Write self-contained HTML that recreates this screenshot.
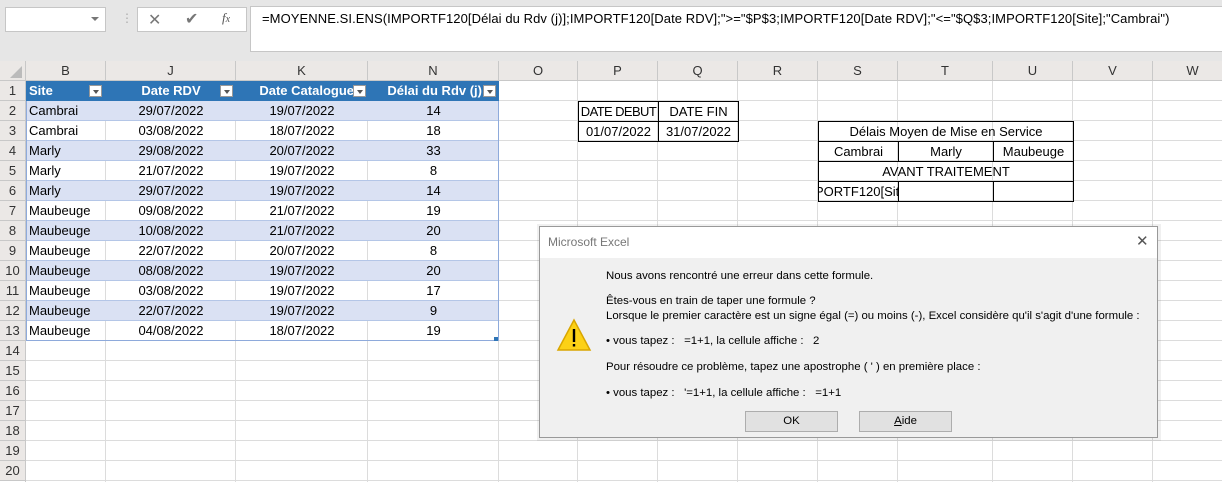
<!DOCTYPE html>
<html><head><meta charset="utf-8"><style>
body{margin:0;width:1222px;height:482px;overflow:hidden;background:#fff;font-family:"Liberation Sans",sans-serif;position:relative}
.a{position:absolute}
.c{position:absolute;height:20px;line-height:20px;font-size:13px;white-space:nowrap;overflow:hidden}
.h{position:absolute;top:61px;height:20px;line-height:20px;font-size:13px;text-align:center;color:#333;border-right:1px solid #c8c8c8;box-sizing:border-box}
.rn{position:absolute;left:0;width:25px;height:20px;line-height:20px;font-size:13px;text-align:center;color:#333;background:#ebe8e6;border-bottom:1px solid #c8c8c8;box-sizing:border-box}
.vl{position:absolute;top:81px;bottom:0;width:1px;background:#dcdcdc}
.dd{position:absolute;top:4px;width:13px;height:12px;background:#fff;border:1px solid #999;box-sizing:border-box}
.dd:after{content:"";position:absolute;left:3px;top:4px;border:3px solid transparent;border-top:4px solid #555}
.bx{position:absolute;border:1px solid #000;box-sizing:border-box;font-size:13px;text-align:center;line-height:19px;color:#000;white-space:nowrap;overflow:hidden}
.dt{position:absolute;left:606px;font-size:11.4px;color:#000;white-space:nowrap}
.btn{position:absolute;top:411px;height:21px;width:93px;background:#e1e1e1;border:1px solid #adadad;box-sizing:border-box;font-size:11.4px;text-align:center;line-height:19px}
</style></head><body>
<div class="a" style="left:0;top:0;width:1222px;height:61px;background:#e6e6e6"></div>
<div class="a" style="left:5px;top:7px;width:101px;height:25px;background:#fff;border:1px solid #c6c6c6;box-sizing:border-box"></div>
<div class="a" style="left:91px;top:17px;border:4px solid transparent;border-top:4px solid #777"></div>
<div class="a" style="left:121px;top:11px;font-size:12px;color:#aaa">⋮</div>
<div class="a" style="left:137px;top:7px;width:110px;height:25px;background:#fff;border:1px solid #c6c6c6;box-sizing:border-box"></div>
<div class="a" style="left:148px;top:10px;font-size:16px;color:#777">✕</div>
<div class="a" style="left:185px;top:9px;font-size:16px;color:#777">✔</div>
<div class="a" style="left:222px;top:10px;font-size:13px;font-style:italic;font-family:'Liberation Serif',serif;color:#555">f<span style="font-size:10px">x</span></div>
<div class="a" style="left:250px;top:6px;width:980px;height:46px;background:#fff;border:1px solid #c6c6c6;box-sizing:border-box"></div>
<div class="a" style="left:262px;top:11px;font-size:13px;letter-spacing:0.08px;color:#000;white-space:nowrap">=MOYENNE.SI.ENS(IMPORTF120[Délai du Rdv (j)];IMPORTF120[Date RDV];"&gt;="$P$3;IMPORTF120[Date RDV];"&lt;="$Q$3;IMPORTF120[Site];"Cambrai")</div>
<div class="a" style="left:0;top:61px;width:1222px;height:20px;background:#ebe8e6;border-bottom:1px solid #c8c8c8;box-sizing:border-box"></div>
<div class="a" style="left:10px;top:66px;border-left:12px solid transparent;border-bottom:12px solid #bbb;width:0;height:0"></div>
<div class="h" style="left:0;width:26px"></div>
<div class="h" style="left:26px;width:80px">B</div>
<div class="h" style="left:106px;width:130px">J</div>
<div class="h" style="left:236px;width:132px">K</div>
<div class="h" style="left:368px;width:131px">N</div>
<div class="h" style="left:499px;width:79px">O</div>
<div class="h" style="left:578px;width:80px">P</div>
<div class="h" style="left:658px;width:80px">Q</div>
<div class="h" style="left:738px;width:80px">R</div>
<div class="h" style="left:818px;width:80px">S</div>
<div class="h" style="left:898px;width:95px">T</div>
<div class="h" style="left:993px;width:80px">U</div>
<div class="h" style="left:1073px;width:80px">V</div>
<div class="h" style="left:1153px;width:80px">W</div>
<div class="a" style="left:25px;top:81px;right:0;bottom:0;background:repeating-linear-gradient(to bottom,transparent 0 19px,#dcdcdc 19px 20px)"></div>
<div class="vl" style="left:105px"></div><div class="vl" style="left:235px"></div><div class="vl" style="left:367px"></div><div class="vl" style="left:498px"></div><div class="vl" style="left:577px"></div><div class="vl" style="left:657px"></div><div class="vl" style="left:737px"></div><div class="vl" style="left:817px"></div><div class="vl" style="left:897px"></div><div class="vl" style="left:992px"></div><div class="vl" style="left:1072px"></div><div class="vl" style="left:1152px"></div>
<div class="a" style="left:25px;top:81px;width:1px;bottom:0;background:#c8c8c8"></div>
<div class="rn" style="top:81px">1</div><div class="rn" style="top:101px">2</div><div class="rn" style="top:121px">3</div><div class="rn" style="top:141px">4</div><div class="rn" style="top:161px">5</div><div class="rn" style="top:181px">6</div><div class="rn" style="top:201px">7</div><div class="rn" style="top:221px">8</div><div class="rn" style="top:241px">9</div><div class="rn" style="top:261px">10</div><div class="rn" style="top:281px">11</div><div class="rn" style="top:301px">12</div><div class="rn" style="top:321px">13</div><div class="rn" style="top:341px">14</div><div class="rn" style="top:361px">15</div><div class="rn" style="top:381px">16</div><div class="rn" style="top:401px">17</div><div class="rn" style="top:421px">18</div><div class="rn" style="top:441px">19</div><div class="rn" style="top:461px">20</div>
<div class="a" style="left:26px;top:81px;width:473px;height:20px;background:#2e75b6"></div>
<div class="c" style="left:29px;top:81px;color:#fff;font-weight:bold">Site</div><div class="dd" style="left:89px;top:85px"></div>
<div class="c" style="left:106px;top:81px;width:130px;text-align:center;color:#fff;font-weight:bold">Date RDV</div><div class="dd" style="left:220px;top:85px"></div>
<div class="c" style="left:236px;top:81px;width:118px;text-align:right;color:#fff;font-weight:bold">Date Catalogue</div><div class="dd" style="left:353px;top:85px"></div>
<div class="c" style="left:368px;top:81px;width:114px;text-align:right;color:#fff;font-weight:bold">Délai du Rdv (j)</div><div class="dd" style="left:483px;top:85px"></div>
<div class="a" style="left:26px;top:101px;width:473px;height:20px;background:#dae1f3"></div>
<div class="a" style="left:26px;top:141px;width:473px;height:20px;background:#dae1f3"></div>
<div class="a" style="left:26px;top:181px;width:473px;height:20px;background:#dae1f3"></div>
<div class="a" style="left:26px;top:221px;width:473px;height:20px;background:#dae1f3"></div>
<div class="a" style="left:26px;top:261px;width:473px;height:20px;background:#dae1f3"></div>
<div class="a" style="left:26px;top:301px;width:473px;height:20px;background:#dae1f3"></div>
<div class="a" style="left:26px;top:101px;width:473px;height:240px;border:1px solid #8eaadb;border-top:none;box-sizing:border-box;background:repeating-linear-gradient(to bottom,transparent 0 19px,#b4c6e7 19px 20px)"></div>
<div class="a" style="left:494px;top:337px;width:4px;height:4px;background:#2e75b6"></div>
<div id="rows"></div>
<div class="bx" style="left:578px;top:101px;width:81px;height:21px;letter-spacing:-0.6px">DATE DEBUT</div>
<div class="bx" style="left:658px;top:101px;width:81px;height:21px">DATE FIN</div>
<div class="bx" style="left:578px;top:121px;width:81px;height:21px">01/07/2022</div>
<div class="bx" style="left:658px;top:121px;width:81px;height:21px">31/07/2022</div>
<div class="bx" style="left:818px;top:121px;width:256px;height:21px">Délais Moyen de Mise en Service</div>
<div class="bx" style="left:818px;top:141px;width:81px;height:21px">Cambrai</div>
<div class="bx" style="left:898px;top:141px;width:96px;height:21px">Marly</div>
<div class="bx" style="left:993px;top:141px;width:81px;height:21px">Maubeuge</div>
<div class="bx" style="left:818px;top:161px;width:256px;height:21px">AVANT TRAITEMENT</div>
<div class="bx" style="left:818px;top:181px;width:81px;height:21px;text-align:left"><span style="margin-left:-4px">PORTF120[Sit</span></div>
<div class="bx" style="left:898px;top:181px;width:96px;height:21px"></div>
<div class="bx" style="left:993px;top:181px;width:81px;height:21px"></div>
<div class="a" style="left:537px;top:224px;width:624px;height:217px;background:rgba(0,0,0,0.06)"></div>
<div class="a" style="left:539px;top:226px;width:619px;height:212px;background:#f0f0f0;border:1px solid #999;box-sizing:border-box"></div>
<div class="a" style="left:540px;top:227px;width:617px;height:31px;background:#fff"></div>
<div class="a" style="left:548px;top:235px;font-size:12px;color:#777">Microsoft Excel</div>
<div class="a" style="left:1136px;top:232px;font-size:15px;color:#555">✕</div>
<div class="dt" style="top:270px">Nous avons rencontré une erreur dans cette formule.</div>
<div class="dt" style="top:295px">Êtes-vous en train de taper une formule ?</div>
<div class="dt" style="top:310px">Lorsque le premier caractère est un signe égal (=) ou moins (-), Excel considère qu'il s'agit d'une formule :</div>
<div class="dt" style="top:335px">• vous tapez :&nbsp;&nbsp; =1+1, la cellule affiche :&nbsp;&nbsp; 2</div>
<div class="dt" style="top:361px">Pour résoudre ce problème, tapez une apostrophe ( ' ) en première place :</div>
<div class="dt" style="top:387px">• vous tapez :&nbsp;&nbsp; '=1+1, la cellule affiche :&nbsp;&nbsp; =1+1</div>
<svg class="a" style="left:556px;top:318px" width="36" height="34" viewBox="0 0 36 34"><polygon points="18,2 34,32 2,32" fill="#fcd116" stroke="#d9a600" stroke-width="1.5"/><rect x="16.8" y="11" width="2.4" height="13" fill="#000"/><rect x="16.8" y="26" width="2.4" height="2.5" fill="#000"/></svg>
<div class="btn" style="left:745px">OK</div>
<div class="btn" style="left:859px"><u>A</u>ide</div>
<script>
var d=[["Cambrai","29/07/2022","19/07/2022","14"],["Cambrai","03/08/2022","18/07/2022","18"],["Marly","29/08/2022","20/07/2022","33"],["Marly","21/07/2022","19/07/2022","8"],["Marly","29/07/2022","19/07/2022","14"],["Maubeuge","09/08/2022","21/07/2022","19"],["Maubeuge","10/08/2022","21/07/2022","20"],["Maubeuge","22/07/2022","20/07/2022","8"],["Maubeuge","08/08/2022","19/07/2022","20"],["Maubeuge","03/08/2022","19/07/2022","17"],["Maubeuge","22/07/2022","19/07/2022","9"],["Maubeuge","04/08/2022","18/07/2022","19"]];
var h="";d.forEach(function(r,i){var t=101+i*20;
h+='<div class="c" style="left:29px;top:'+t+'px">'+r[0]+'</div>';
h+='<div class="c" style="left:106px;width:130px;text-align:center;top:'+t+'px">'+r[1]+'</div>';
h+='<div class="c" style="left:236px;width:132px;text-align:center;top:'+t+'px">'+r[2]+'</div>';
h+='<div class="c" style="left:368px;width:131px;text-align:center;top:'+t+'px">'+r[3]+'</div>';});
document.getElementById("rows").innerHTML=h;
</script>
</body></html>
